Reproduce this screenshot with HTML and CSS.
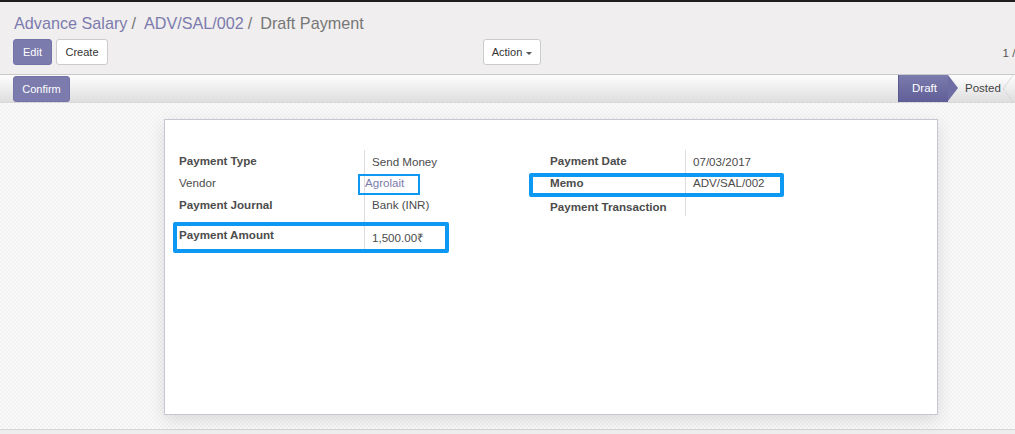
FILE: index.html
```html
<!DOCTYPE html>
<html>
<head>
<meta charset="utf-8">
<link rel="stylesheet" href="styles.css">
</head>
<body>
<div class="topbar"></div>
<div class="cp">
  <div class="crumbs">
    <a class="crumb">Advance Salary</a><span class="sep">/</span>
    <a class="crumb">ADV/SAL/002</a><span class="sep">/</span>
    <span class="crumb-active">Draft Payment</span>
  </div>
  <div class="cp-row">
    <div class="cp-left">
      <button class="btn btn-primary btn-edit">Edit</button>
      <button class="btn btn-default btn-create">Create</button>
    </div>
    <div class="cp-mid">
      <button class="btn btn-default btn-action">Action <span class="caret"></span></button>
    </div>
    <div class="cp-right"><span class="pager">1 / 1</span></div>
  </div>
</div>
<div class="statusbar">
  <button class="btn btn-primary btn-confirm">Confirm</button>
  <div class="states">
    <div class="state state-active">Draft</div>
    <div class="state">Posted</div>
  </div>
</div>
<div class="content">
  <div class="sheet">
    <div class="groups">
      <div class="group group-left">
        <div class="row r1"><div class="lbl">Payment Type</div><div class="val">Send Money</div></div>
        <div class="row r2"><div class="lbl lbl-normal">Vendor</div><div class="val val-link">Agrolait</div></div>
        <div class="row r3"><div class="lbl">Payment Journal</div><div class="val">Bank (INR)</div></div>
        <div class="row r4"><div class="lbl">Payment Amount</div><div class="val">1,500.00₹</div></div>
      </div>
      <div class="group group-right">
        <div class="row r1"><div class="lbl">Payment Date</div><div class="val">07/03/2017</div></div>
        <div class="row rr2"><div class="lbl">Memo</div><div class="val">ADV/SAL/002</div></div>
        <div class="row rr3"><div class="lbl">Payment Transaction</div><div class="val"></div></div>
      </div>
    </div>
    <div class="hl hl-agro"></div>
    <div class="hl hl-memo"></div>
    <div class="hl hl-amount"></div>
  </div>
</div>
<div class="footer"></div>
</body>
</html>
```
FILE: styles.css
```css
html, body { margin: 0; padding: 0; overflow: hidden; }
body {
  width: 1015px;
  height: 434px;
  font-family: "Liberation Sans", Arial, sans-serif;
  color: #4c4c4c;
  background: #eeeeee;
}
.topbar { height: 2px; background: #1e1e1e; }
.cp {
  height: 73px;
  background: #f0eeee;
  border-bottom: 1px solid #c9c9c9;
  box-sizing: border-box;
  padding: 0 0 0 14px;
}
.crumbs {
  height: 37px;
  display: flex;
  align-items: center;
  font-size: 16.2px;
  padding-top: 5px;
  box-sizing: border-box;
}
.crumb { color: #7c7bad; }
.sep { color: #777; margin: 0 8px 0 4px; }
.crumb-active { color: #777; }
.cp-row {
  display: flex;
  align-items: center;
  height: 26px;
  margin-left: -1px;
}
.cp-left { display: flex; gap: 4px; width: 470px; }
.cp-mid { flex: 1; }
.cp-right { margin-right: -10px; }
.pager { font-size: 11.5px; color: #555; }
.btn {
  font-family: "Liberation Sans", Arial, sans-serif;
  font-size: 11px;
  height: 26px;
  border-radius: 3px;
  padding: 0;
  box-sizing: border-box;
  cursor: pointer;
}
.btn-primary { background: #7c7bad; color: #fff; border: 1px solid #7473a8; }
.btn-default { background: #fff; color: #333; border: 1px solid #cccccc; }
.btn-edit { width: 39px; }
.btn-create { width: 52px; }
.btn-action { width: 58px; }
.caret {
  display: inline-block;
  width: 0; height: 0;
  border-left: 3px solid transparent;
  border-right: 3px solid transparent;
  border-top: 3px solid #555;
  vertical-align: middle;
  margin-left: 1px;
}
.statusbar {
  height: 28px;
  display: flex;
  align-items: center;
  justify-content: space-between;
  padding-left: 13px;
  box-sizing: border-box;
  background: linear-gradient(#fdfdfd, #dedede);
  border-bottom: 1px solid #d8d8d8;
}
.btn-confirm { width: 57px; height: 26px; margin-top: 1px; }
.states { display: flex; height: 27px; align-self: flex-start; }
.state {
  position: relative;
  font-size: 11.5px;
  line-height: 27px;
  color: #444;
  padding: 0 14px 0 17px;
  width: 67px;
  box-sizing: border-box;
}
.state-active {
  color: #fff;
  width: 50px;
  padding-left: 13px;
  background: linear-gradient(#7c7bad, #5f5e97);
  border-left: 1px solid #5a5990;
}
.state-active::after {
  content: "";
  position: absolute;
  right: -10px;
  top: 0;
  width: 0; height: 0;
  border-top: 13.5px solid transparent;
  border-bottom: 13.5px solid transparent;
  border-left: 10px solid #6e6da3;
  z-index: 2;
}
.state:last-child::after {
  content: "";
  position: absolute;
  right: 2px;
  top: 0;
  width: 10px;
  height: 27px;
  background: linear-gradient(to bottom right, transparent 48%, #cfcfcf 50%, transparent 55%) top/10px 14px no-repeat,
              linear-gradient(to top right, transparent 48%, #cfcfcf 50%, transparent 55%) bottom/10px 13px no-repeat;
}
.content {
  height: 327px;
  box-sizing: border-box;
  padding-top: 16px;
  background-color: #f7f7f7;
  background-image: repeating-conic-gradient(#f2f2f2 0 25%, #fafafa 0 50%);
  background-size: 4px 4px;
  border-bottom: 1px solid #d6d6d6;
}
.sheet {
  position: relative;
  margin-left: 164px;
  width: 774px;
  height: 296px;
  box-sizing: border-box;
  background: #fff;
  border: 1px solid #c8c6d2;
  box-shadow: 0 5px 16px rgba(0,0,0,0.12);
  padding: 30px 0 0 14px;
}
.groups { display: flex; }
.group { font-size: 11.6px; }
.group-left { width: 371px; }
.row { display: flex; align-items: center; }
.lbl { font-weight: bold; color: #4c4c4c; box-sizing: border-box; }
.lbl-normal { font-weight: normal; }
.group-left .lbl { width: 185px; }
.group-right .lbl { width: 135px; }
.val {
  align-self: stretch;
  display: flex;
  align-items: center;
  border-left: 1px solid #dddddd;
  padding-left: 7px;
  color: #4c4c4c;
}
.val-link { color: #7c7bad; padding-left: 0; }
.r1 { height: 20px; }
.r2 { height: 24px; }
.r3 { height: 21px; }
.r4 { height: 34px; padding-top: 0; box-sizing: border-box; }
.r4 .lbl { align-self: flex-start; padding-top: 13px; }
.r4 .val { align-items: flex-start; padding-top: 15px; padding-bottom: 0; }
.rr2 { height: 24px; }
.rr3 { height: 22px; padding-top: 2px; box-sizing: border-box; }
.r1 .val { padding-top: 2px; }
.hl {
  position: absolute;
  border: 4px solid #0d98f3;
  border-radius: 2px;
  box-sizing: border-box;
}
.hl-agro { left: 193px; top: 54px; width: 62px; height: 21px; border-width: 2px; border-radius: 0; }
.hl-memo { left: 364px; top: 53px; width: 255px; height: 24px; }
.hl-amount { left: 8px; top: 102px; width: 276px; height: 31px; }
.footer { height: 4px; background: #eeeeee; }
```
